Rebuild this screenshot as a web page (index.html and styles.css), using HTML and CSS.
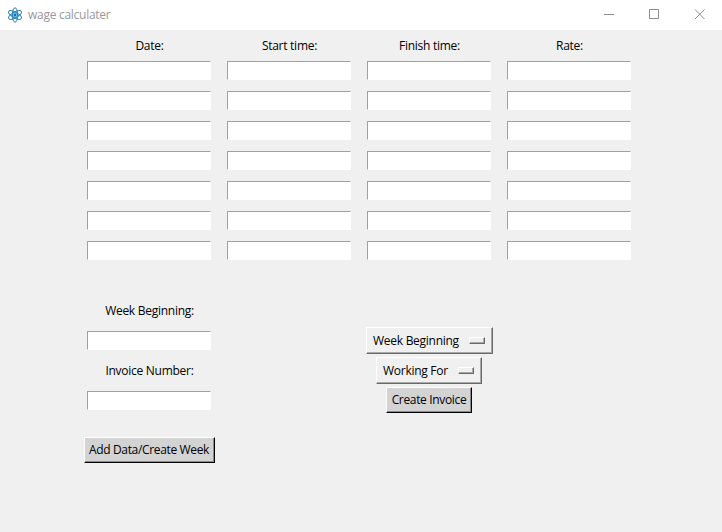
FILE: index.html
```html
<!DOCTYPE html>
<html lang="en">
<head>
<meta charset="utf-8">
<title>wage calculater</title>
<link rel="stylesheet" href="styles.css">
</head>
<body>
<header class="titlebar">
  <svg class="logo" width="16" height="16" viewBox="0 0 16 16" fill="none" stroke="#2c83b8" stroke-width="1">
    <circle cx="8" cy="8" r="3.6" fill="#6cc0f2" stroke="none"/>
    <ellipse cx="8" cy="8" rx="2.7" ry="7.2"/>
    <ellipse cx="8" cy="8" rx="2.7" ry="7.2" transform="rotate(60 8 8)"/>
    <ellipse cx="8" cy="8" rx="2.7" ry="7.2" transform="rotate(120 8 8)"/>
    <circle cx="8" cy="8" r="1.2" fill="#1270ad" stroke="none"/>
  </svg>
  <span class="title">wage calculater</span>
  <svg class="controls" width="138" height="29" viewBox="0 0 138 29" fill="none" stroke="#8c8c8c">
    <path d="M20 14.5h10M65.5 9.5h9v9h-9zM111 9.5l9.5 9.5M120.5 9.5l-9.5 9.5"/>
  </svg>
</header>
<main class="form">
  <div class="label"><span>Date:</span></div>
  <div class="label"><span>Start time:</span></div>
  <div class="label"><span>Finish time:</span></div>
  <div class="label"><span>Rate:</span></div>
  <input class="entry"><input class="entry"><input class="entry"><input class="entry">
  <input class="entry"><input class="entry"><input class="entry"><input class="entry">
  <input class="entry"><input class="entry"><input class="entry"><input class="entry">
  <input class="entry"><input class="entry"><input class="entry"><input class="entry">
  <input class="entry"><input class="entry"><input class="entry"><input class="entry">
  <input class="entry"><input class="entry"><input class="entry"><input class="entry">
  <input class="entry"><input class="entry"><input class="entry"><input class="entry">
</main>
<section class="lower">
  <div class="week">
    <div class="label"><span>Week Beginning:</span></div>
    <input class="entry">
    <div class="label"><span>Invoice Number:</span></div>
    <input class="entry">
    <button class="button add"><span>Add Data/Create Week</span></button>
  </div>
  <div class="invoice">
    <button class="option option-week"><span>Week Beginning</span><i class="indicator"></i></button>
    <button class="option option-work"><span>Working For</span><i class="indicator"></i></button>
    <button class="button create"><span>Create Invoice</span></button>
  </div>
</section>
</body>
</html>
```
FILE: styles.css
```css
* { box-sizing: border-box; }
body {
  margin: 0;
  height: 532px;
  overflow: hidden;
  background: #f0f0f0;
  color: #000;
  font: 12px/16px "Open Sans", "Noto Sans", sans-serif;
}
span { white-space: nowrap; letter-spacing: -0.27px; }
.titlebar {
  display: flex;
  align-items: center;
  height: 30px;
  padding: 0 0 1px 7px;
  background: #fff;
}
.title { flex: 1; margin-left: 5px; padding-top: 1px; color: #999; }
.form {
  display: grid;
  grid-template-columns: repeat(4, 140px);
  grid-template-rows: 26px repeat(7, 30px);
  padding: 0 79px;
  align-items: center;
  justify-items: center;
}
.label { display: flex; justify-content: center; padding: 5px 0 0 1px; }
.lower .label { padding-top: 0; }
.entry {
  width: 124px;
  height: 19px;
  margin: 0 0 2px;
  padding: 0 2px;
  border: 1px solid;
  border-color: #a0a0a0 #fff #fff #a0a0a0;
  border-radius: 0;
  background: #fff;
  outline: 0;
}
.lower { display: flex; padding: 30px 0 0 79px; }
.week {
  display: grid;
  grid-template-rows: repeat(4, 30px) 67px;
  width: 140px;
  align-items: center;
  justify-items: center;
}
.invoice {
  display: flex;
  flex-direction: column;
  align-items: center;
  gap: 3px;
  width: 140px;
  margin: 31px 0 0 140px;
}
.button, .option {
  display: flex;
  align-items: center;
  justify-content: center;
  height: 26px;
  padding: 0;
  border: 1px solid;
  border-radius: 0;
  color: #000;
  font: inherit;
}
.button {
  border-color: #fff #000 #000 #fff;
  background: #d3d3d3;
  box-shadow: inset -1px -1px #8a8a8a;
}
.button span { letter-spacing: -0.34px; }
.add { width: 131px; }
.create { width: 86px; }
.option {
  justify-content: space-between;
  height: 27px;
  padding: 1px 7px 0 6px;
  border-color: #fff #696969 #696969 #fff;
  background: #f0f0f0;
  box-shadow: inset -1px -1px #a8a8a8;
}
.option-week { width: 127px; margin-left: 1px; }
.option-work { width: 106px; }
.indicator {
  width: 16px;
  height: 7px;
  margin-bottom: 2px;
  border: 1px solid;
  border-color: #fff #696969 #696969 #fff;
  box-shadow: inset -1px -1px #a8a8a8;
}
```
